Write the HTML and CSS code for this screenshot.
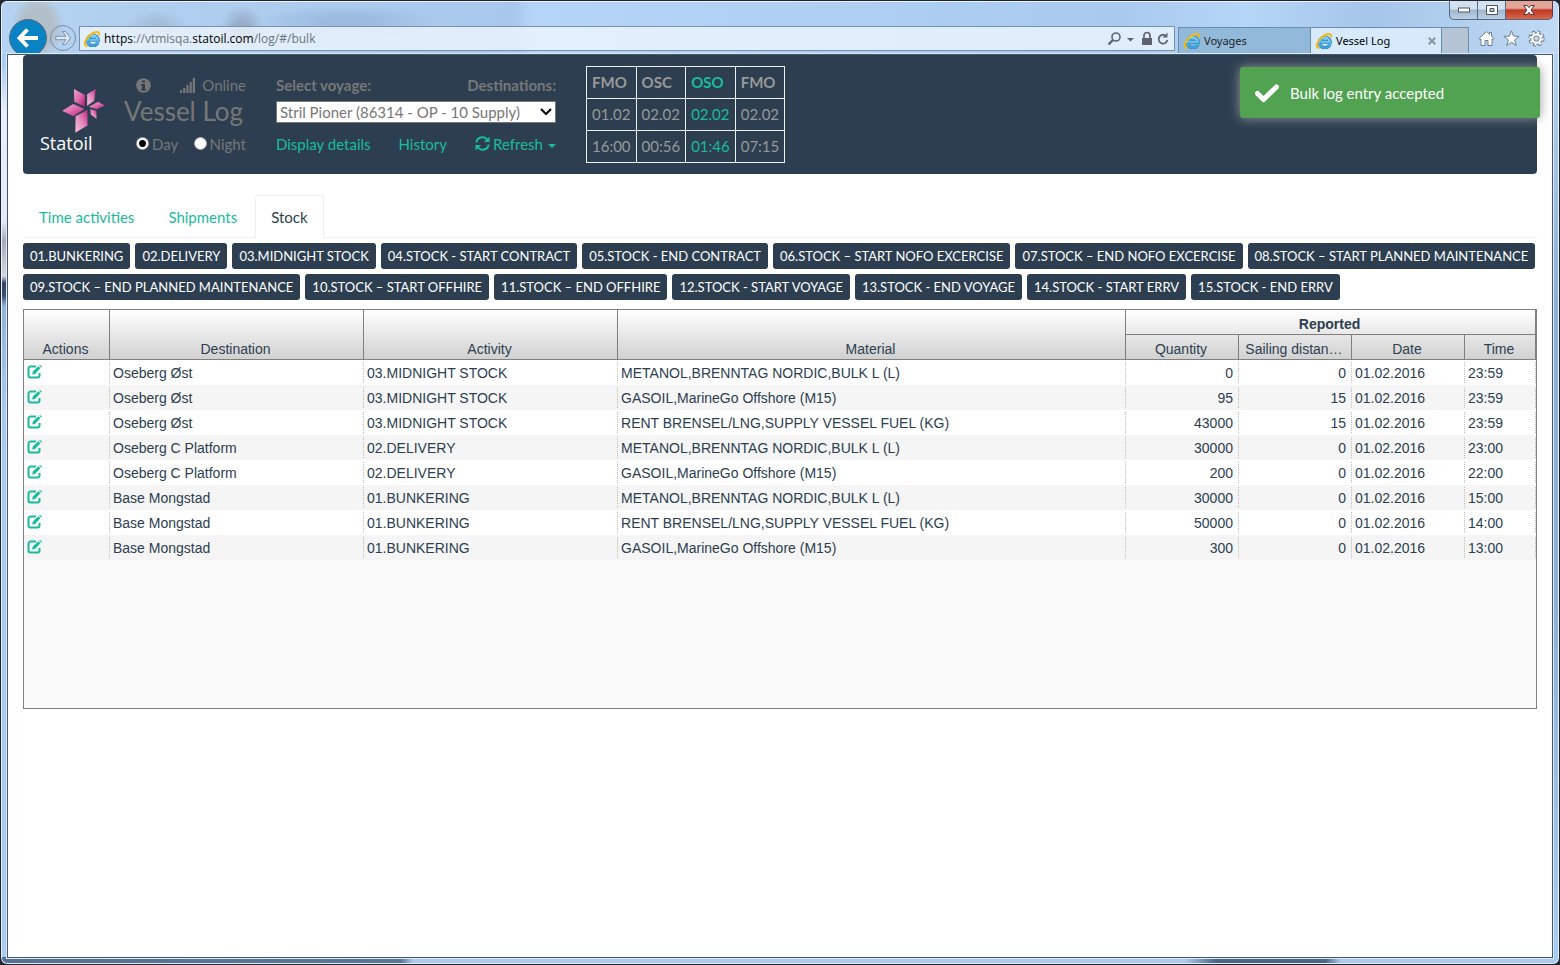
FILE: index.html
```html
<!DOCTYPE html>
<html lang="en">
<head>
<meta charset="utf-8">
<title>Vessel Log</title>
<link rel="stylesheet" href="styles.css">
</head>
<body>
<svg class="defs" aria-hidden="true">
  <defs>
    <linearGradient id="petal" x1="0" y1="0" x2="1" y2="1"><stop offset="0" stop-color="#f3a9cf"/><stop offset=".5" stop-color="#dd6aa9"/><stop offset="1" stop-color="#b8177a"/></linearGradient>
    <linearGradient id="petal-alt" x1="1" y1="0" x2="0" y2="1"><stop offset="0" stop-color="#c22784"/><stop offset=".5" stop-color="#e58bbc"/><stop offset="1" stop-color="#f6c3dd"/></linearGradient>
    <linearGradient id="ie-blue" x1="0" y1="0" x2="0" y2="1"><stop offset="0" stop-color="#8ad8f8"/><stop offset="1" stop-color="#3a9fdb"/></linearGradient>
    <symbol id="ie" viewBox="0 0 16 16">
      <path d="M13.800 11.200A5.200 5.200 0 1 1 14 8.900H5" fill="none" stroke="#2b86c2" stroke-width="3.600"/>
      <path d="M13.600 11.200A5.200 5.200 0 1 1 13.800 8.900H5" fill="none" stroke="url(#ie-blue)" stroke-width="2.200"/>
      <path d="M2.800 15C-.8 14 .8 8.500 5.500 4.500S15.500-.5 15.200 3.800" fill="none" stroke="#f5b80f" stroke-width="1.900" stroke-linecap="round"/>
    </symbol>
    <symbol id="edit" viewBox="0 0 16 14">
      <path d="M9 1.500H3.500A2 2 0 0 0 1.500 3.500v7A2 2 0 0 0 3.500 12.500h7a2 2 0 0 0 2-2V8" fill="none" stroke="currentColor" stroke-width="2"/>
      <path d="M5.200 9.500l.6-2.900L11.400 1.200l2 2L8 9zM12.200.6l.8-.6L15 1.800l-.7.900z" fill="currentColor"/>
    </symbol>
  </defs>
</svg>
<div class="window">
  <header class="chrome">
    <div class="titlebar">
      <button class="win-btn" aria-label="Minimize"><svg width="14" height="6" viewBox="0 0 14 6"><rect x="1.500" y="1" width="11" height="4" fill="#fff" stroke="#4b5565"/></svg></button>
      <button class="win-btn" aria-label="Maximize"><svg width="12" height="10" viewBox="0 0 12 10"><path d="M.5.500h11v9H.500zM4 3.500v3h4v-3z" fill="#fff" fill-rule="evenodd" stroke="#4b5565"/></svg></button>
      <button class="win-btn win-close" aria-label="Close"><svg width="12" height="10" viewBox="0 0 12 10"><path d="M.7.500h3.500L6 2.700 7.800.500h3.500L8 5l3.300 4.500H7.800L6 7.300 4.200 9.500H.7L4 5z" fill="#fff" stroke="#5b3440"/></svg></button>
    </div>
    <div class="navbar">
      <button class="back" aria-label="Back"><svg width="22" height="20" viewBox="0 0 22 20"><path d="M10.500 1.500L2.500 10l8 8.500M3 10h18" fill="none" stroke="#fff" stroke-width="4"/></svg></button>
      <button class="forward" aria-label="Forward"><svg width="16" height="16" viewBox="0 0 16 16"><path d="M7.500 1.500h3L15.500 8l-5 6.500h-3L11 9.700H.8V6.300H11z" fill="#dfeaf6" stroke="#7b8fa8"/></svg></button>
      <div class="address">
        <svg width="16" height="16"><use href="#ie"/></svg>
        <div class="url"><b>https</b>://vtmisqa.<b>statoil.com</b>/log/#/bulk</div>
        <svg class="address-icons" width="62" height="16" viewBox="0 0 62 16">
          <circle cx="9" cy="6" r="4" fill="none" stroke="#5d6470" stroke-width="1.600"/><path d="M6 9l-4.500 4.500" stroke="#5d6470" stroke-width="2.400"/>
          <path d="M20 7h7l-3.500 3.500z" fill="#5d6470"/>
          <path d="M35 7h10v7H35z" fill="#5d6470"/><path d="M37 7V4.500a3 3 0 0 1 6 0V7" fill="none" stroke="#5d6470" stroke-width="1.700"/>
          <path d="M58 4.200A4.400 4.400 0 1 0 60.400 9" fill="none" stroke="#5d6470" stroke-width="1.800"/><path d="M60.500 1.500v5H55.500z" fill="#5d6470"/>
        </svg>
      </div>
      <div class="tabs">
        <button class="tab"><svg width="16" height="16"><use href="#ie"/></svg>Voyages</button>
        <button class="tab tab-active"><svg width="16" height="16"><use href="#ie"/></svg>Vessel Log<svg class="tab-close" width="8" height="8" viewBox="0 0 8 8"><path d="M.7.700l6.600 6.600M7.300.700L.7 7.300" stroke="#8b95a1" stroke-width="2"/></svg></button>
        <button class="new-tab" aria-label="New tab"></button>
      </div>
      <div class="tools">
        <button class="tool" aria-label="Home"><svg width="17" height="17" viewBox="0 0 17 17"><path d="M8.500 1.500L1 8.500l1 1.200 1-.8V15.500h4v-5h3v5h4V8.900l1 .8 1-1.200-2.500-2.300V2.500h-2v1.800z" fill="#fff" stroke="#6c7d92"/></svg></button>
        <button class="tool" aria-label="Favorites"><svg width="17" height="17" viewBox="0 0 17 17"><path d="M8.500.800l2 5.300 5.700.300-4.500 3.500 1.600 5.600-4.800-3.200-4.800 3.200 1.600-5.600L.8 6.400l5.700-.3z" fill="#fff" stroke="#6c7d92"/></svg></button>
        <button class="tool" aria-label="Settings"><svg width="17" height="17" viewBox="0 0 17 17"><circle cx="8.500" cy="8.500" r="6.200" fill="none" stroke="#6c7d92" stroke-width="4" stroke-dasharray="2.800 2.070"/><circle cx="8.500" cy="8.500" r="4.300" fill="none" stroke="#6c7d92" stroke-width="4"/><circle cx="8.500" cy="8.500" r="6" fill="none" stroke="#fff" stroke-width="2.400" stroke-dasharray="1.900 2.810"/><circle cx="8.500" cy="8.500" r="4.200" fill="none" stroke="#fff" stroke-width="2.200"/></svg></button>
      </div>
    </div>
  </header>

  <main class="page">
    <section class="banner">
      <div class="logo">
        <svg class="star" width="43" height="44" viewBox="0 0 130 134">
          <path d="M36 0l33 18v36L37 39z" fill="url(#petal)"/>
          <path d="M102 0L76 16v35l22-15z" fill="url(#petal-alt)"/>
          <path d="M0 66l34-20 34 15-34 22z" fill="url(#petal)"/>
          <path d="M130 50l-21-11-28 15 24 8z" fill="url(#petal)"/>
          <path d="M86 62l18 4 1 25-18-13z" fill="url(#petal-alt)"/>
          <path d="M77 64v47l-37 22 1-50z" fill="url(#petal-alt)"/>
        </svg>
        <span class="logo-name">Statoil</span>
      </div>
      <div class="stack status">
        <div class="row status-row">
          <svg width="15" height="15" viewBox="0 0 15 15"><circle cx="7.500" cy="7.500" r="7.300" fill="#777"/><path d="M6 2.500h3v2H6zM5 6h4v5h1v1.500H5V11h1V7.500H5z" fill="#2c3e50"/></svg>
          <span class="online"><svg width="15" height="15" viewBox="0 0 15 15"><path d="M0 12h2.200v3H0zM3.200 10h2.200v5H3.200zM6.400 7h2.200v8H6.400zM9.600 4h2.200v11H9.600zM12.700 0H15v15h-2.300z" fill="#777"/></svg>Online</span>
        </div>
        <h1 class="app-title">Vessel Log</h1>
        <div class="row mode-row">
          <label class="mode"><input type="radio" name="mode" checked>Day</label>
          <label class="mode"><input type="radio" name="mode">Night</label>
        </div>
      </div>
      <div class="stack voyage">
        <div class="row"><label class="caption" for="voyage">Select voyage:</label><span class="caption">Destinations:</span></div>
        <div class="select-row">
          <select id="voyage"><option>Stril Pioner (86314 - OP - 10 Supply)</option></select>
          <svg class="chevron" width="12" height="8" viewBox="0 0 12 8"><path d="M1 1l5 5 5-5" fill="none" stroke="#000" stroke-width="2"/></svg>
        </div>
        <div class="row">
          <a href="#details">Display details</a>
          <a href="#history">History</a>
          <a class="refresh" href="#refresh"><svg width="15" height="15" viewBox="0 0 15 15"><path d="M1.300 6.500A6.200 6.200 0 0 1 12 3.300M13.700 8.500A6.200 6.200 0 0 1 3 11.700" fill="none" stroke="currentColor" stroke-width="2"/><path d="M14.500.500v5.500H9zM.5 14.500V9H6z" fill="currentColor"/></svg>Refresh<svg class="caret" width="8" height="4" viewBox="0 0 8 4"><path d="M0 0h8L4 4z" fill="currentColor"/></svg></a>
        </div>
      </div>
      <table class="stops">
        <tr><th>FMO</th><th>OSC</th><th class="current">OSO</th><th>FMO</th></tr>
        <tr><td>01.02</td><td>02.02</td><td class="current">02.02</td><td>02.02</td></tr>
        <tr><td>16:00</td><td>00:56</td><td class="current">01:46</td><td>07:15</td></tr>
      </table>
    </section>

    <div class="toast" role="status">
      <svg width="24" height="19" viewBox="0 0 24 19"><path d="M2.500 9.500l6 6L21.500 3" fill="none" stroke="#fff" stroke-width="5" stroke-linecap="round" stroke-linejoin="round"/></svg>
      Bulk log entry accepted
    </div>

    <nav class="views">
      <a class="view" href="#time">Time activities</a>
      <a class="view" href="#shipments">Shipments</a>
      <a class="view view-active" href="#bulk">Stock</a>
    </nav>

    <div class="activities">
      <button class="act">01.BUNKERING</button>
      <button class="act">02.DELIVERY</button>
      <button class="act">03.MIDNIGHT STOCK</button>
      <button class="act">04.STOCK - START CONTRACT</button>
      <button class="act">05.STOCK - END CONTRACT</button>
      <button class="act">06.STOCK – START NOFO EXCERCISE</button>
      <button class="act">07.STOCK – END NOFO EXCERCISE</button>
      <button class="act">08.STOCK – START PLANNED MAINTENANCE</button>
      <button class="act">09.STOCK – END PLANNED MAINTENANCE</button>
      <button class="act">10.STOCK – START OFFHIRE</button>
      <button class="act">11.STOCK – END OFFHIRE</button>
      <button class="act">12.STOCK - START VOYAGE</button>
      <button class="act">13.STOCK - END VOYAGE</button>
      <button class="act">14.STOCK - START ERRV</button>
      <button class="act">15.STOCK - END ERRV</button>
    </div>

    <div class="grid">
      <table class="log">
        <colgroup><col class="c-actions"><col class="c-place"><col class="c-place"><col><col class="c-num"><col class="c-num"><col class="c-num"><col class="c-time"></colgroup>
        <thead>
          <tr><th rowspan="2">Actions</th><th rowspan="2">Destination</th><th rowspan="2">Activity</th><th rowspan="2">Material</th><th class="group" colspan="4">Reported</th></tr>
          <tr><th>Quantity</th><th class="clip">Sailing distan…</th><th>Date</th><th>Time</th></tr>
        </thead>
        <tbody>
          <tr><td><div><button class="edit" aria-label="Edit"><svg width="16" height="14"><use href="#edit"/></svg></button></div></td><td><div>Oseberg Øst</div></td><td><div>03.MIDNIGHT STOCK</div></td><td><div>METANOL,BRENNTAG NORDIC,BULK L (L)</div></td><td class="num"><div>0</div></td><td class="num"><div>0</div></td><td><div>01.02.2016</div></td><td><div>23:59</div></td></tr>
          <tr><td><div><button class="edit" aria-label="Edit"><svg width="16" height="14"><use href="#edit"/></svg></button></div></td><td><div>Oseberg Øst</div></td><td><div>03.MIDNIGHT STOCK</div></td><td><div>GASOIL,MarineGo Offshore (M15)</div></td><td class="num"><div>95</div></td><td class="num"><div>15</div></td><td><div>01.02.2016</div></td><td><div>23:59</div></td></tr>
          <tr><td><div><button class="edit" aria-label="Edit"><svg width="16" height="14"><use href="#edit"/></svg></button></div></td><td><div>Oseberg Øst</div></td><td><div>03.MIDNIGHT STOCK</div></td><td><div>RENT BRENSEL/LNG,SUPPLY VESSEL FUEL (KG)</div></td><td class="num"><div>43000</div></td><td class="num"><div>15</div></td><td><div>01.02.2016</div></td><td><div>23:59</div></td></tr>
          <tr><td><div><button class="edit" aria-label="Edit"><svg width="16" height="14"><use href="#edit"/></svg></button></div></td><td><div>Oseberg C Platform</div></td><td><div>02.DELIVERY</div></td><td><div>METANOL,BRENNTAG NORDIC,BULK L (L)</div></td><td class="num"><div>30000</div></td><td class="num"><div>0</div></td><td><div>01.02.2016</div></td><td><div>23:00</div></td></tr>
          <tr><td><div><button class="edit" aria-label="Edit"><svg width="16" height="14"><use href="#edit"/></svg></button></div></td><td><div>Oseberg C Platform</div></td><td><div>02.DELIVERY</div></td><td><div>GASOIL,MarineGo Offshore (M15)</div></td><td class="num"><div>200</div></td><td class="num"><div>0</div></td><td><div>01.02.2016</div></td><td><div>22:00</div></td></tr>
          <tr><td><div><button class="edit" aria-label="Edit"><svg width="16" height="14"><use href="#edit"/></svg></button></div></td><td><div>Base Mongstad</div></td><td><div>01.BUNKERING</div></td><td><div>METANOL,BRENNTAG NORDIC,BULK L (L)</div></td><td class="num"><div>30000</div></td><td class="num"><div>0</div></td><td><div>01.02.2016</div></td><td><div>15:00</div></td></tr>
          <tr><td><div><button class="edit" aria-label="Edit"><svg width="16" height="14"><use href="#edit"/></svg></button></div></td><td><div>Base Mongstad</div></td><td><div>01.BUNKERING</div></td><td><div>RENT BRENSEL/LNG,SUPPLY VESSEL FUEL (KG)</div></td><td class="num"><div>50000</div></td><td class="num"><div>0</div></td><td><div>01.02.2016</div></td><td><div>14:00</div></td></tr>
          <tr><td><div><button class="edit" aria-label="Edit"><svg width="16" height="14"><use href="#edit"/></svg></button></div></td><td><div>Base Mongstad</div></td><td><div>01.BUNKERING</div></td><td><div>GASOIL,MarineGo Offshore (M15)</div></td><td class="num"><div>300</div></td><td class="num"><div>0</div></td><td><div>01.02.2016</div></td><td><div>13:00</div></td></tr>
        </tbody>
      </table>
    </div>
  </main>
</div>
</body>
</html>
```
FILE: styles.css
```css
* { box-sizing: border-box; }

body {
  margin: 0;
  background: #23262e;
  font-family: Lato, sans-serif;
  font-size: 15px;
  line-height: 20px;
  color: #2c3e50;
}

button {
  margin: 0;
  padding: 0;
  border: 0;
  background: none;
  font: inherit;
  color: inherit;
}

svg { flex: none; display: block; }
.defs { position: absolute; width: 0; height: 0; }
a { color: #18bc9c; text-decoration: none; }

/* Window frame */
.window {
  display: flex;
  flex-direction: column;
  min-height: 100vh;
  padding: 0 6px 6px;
  border: 1px solid #20242f;
  border-radius: 7px;
  box-shadow: inset 0 0 0 1px #e3f0fc;
  background:
    linear-gradient(90deg, #57708f 0, #5b7594 400px, transparent 412px) bottom / 100% 7px no-repeat,
    linear-gradient(90deg, transparent 76%, #4b6580 78%, #4b6580 85%, transparent 86%) bottom / 100% 7px no-repeat,
    linear-gradient(180deg, transparent 60px, #e9eef6 110px, #e6ebf3 220px, #aaa9b4 240px, #d8d8e0 275px, #34465e 282px, #3d5270 295px, #94b2d6 305px, #a9c7ea 400px, transparent 450px) left / 7px 100% no-repeat,
    linear-gradient(180deg, #c3d9f2, #8db0d6 300px, #8db0d6 600px, #a9cdf2) right / 7px 100% no-repeat,
    #a9cbef;
}

.chrome {
  margin: 0 -5px;
  padding: 0 5px;
  border-radius: 6px 6px 0 0;
  background:
    linear-gradient(180deg, #e6f2fd 1px, transparent 1px),
    radial-gradient(ellipse 26px 34px at 36px 26px, #b3bfc8 60%, transparent),
    radial-gradient(ellipse 22px 24px at 240px 28px, #98adca 30%, transparent),
    radial-gradient(ellipse 30px 16px at 155px 24px, #a3bddb 20%, transparent),
    radial-gradient(ellipse 90px 16px at 345px 20px, #9bbbe0 30%, transparent),
    linear-gradient(90deg, #b4d2f1, #a7c8ec 33%, #b4d5f8 34%, #a8caee 72%, #b6d6f8 80%, #a5c5e9 88%, #c0daf5);
}

.titlebar { display: flex; justify-content: flex-end; height: 18px; }

.win-btn {
  display: flex;
  align-items: center;
  justify-content: center;
  width: 28px;
  height: 19px;
  border: 1px solid #56697f;
  border-top: 0;
  border-right: 0;
  background: linear-gradient(#d3e1f0 45%, #a0b7cf 50%, #bad0e6);
}
.win-btn:first-child { border-radius: 0 0 0 5px; }
.win-close {
  width: 48px;
  border-right: 1px solid #6b3038;
  border-radius: 0 0 5px 0;
  background: linear-gradient(#e3a598 40%, #bf3a25 50%, #d7664a);
}

.navbar { display: flex; align-items: flex-end; height: 35px; overflow: hidden; padding-left: 2px; }

.back, .forward { display: flex; align-items: center; justify-content: center; border-radius: 50%; }
.back {
  align-self: flex-start;
  width: 38px;
  height: 38px;
  border: 1px solid #5a6b7c;
  background: #0a83c4;
}
.forward {
  width: 26px;
  height: 26px;
  margin: 0 3px 3px;
  border: 1px solid #7b8fa8;
}

.address {
  flex: 1;
  display: flex;
  align-items: center;
  height: 25px;
  margin: 0 3px 3px 0;
  padding: 0 5px 0 4px;
  border: 1px solid #7790ad;
  background: rgba(238, 245, 253, .8);
  font: 12px/16px "Open Sans", sans-serif;
  color: #6d737b;
}
.url { flex: 1; margin-left: 4px; }
.url b { font-weight: 400; color: #000; }

.tabs { display: flex; height: 27px; }
.tab, .new-tab { border: 1px solid #6d8cad; border-bottom: 0; }
.tab {
  display: flex;
  align-items: center;
  gap: 4px;
  width: 133px;
  padding: 0 5px;
  background: #92b9da;
  font: 11px/16px "Noto Sans", sans-serif;
  text-align: left;
  color: #222;
}
.tab-active { width: 131px; border-left: 0; background: #d7eafb; color: #000; }
.tab-close { margin-left: auto; }
.new-tab { width: 27px; border-left: 0; background: #b5c4d4; }
.tools { display: flex; gap: 8px; margin: 0 8px 7px 9px; }

/* Page */
.page {
  position: relative;
  flex: 1;
  padding: 0 15px 20px;
  border: 1px solid #45566b;
  box-shadow: 0 0 0 1px #dcebfa;
  background: #fff;
}

.banner {
  display: flex;
  align-items: center;
  gap: 30px;
  padding: 0 17px;
  border-radius: 4px;
  background: #2c3e50;
  color: #777;
}

.logo { display: flex; flex-direction: column; width: 65px; margin-right: -11px; padding-top: 12px; }
.star { margin-left: 22px; }
.logo-name { font: 18px/20px "Open Sans", sans-serif; color: #fff; }

.stack { display: grid; grid-template-rows: 20px 33px 31px; align-items: center; padding: 20px 0 15px; }
.row { display: flex; align-items: center; justify-content: space-between; }
.status { width: 122px; }
.status-row { padding-left: 12px; }
.online { display: flex; align-items: center; gap: 7px; }
.app-title { margin: 0; padding-bottom: 2px; font-size: 26px; line-height: 28px; font-weight: 400; }
.mode-row { padding-left: 12px; }
.mode { display: flex; align-items: center; gap: 3px; }
.mode input {
  appearance: none;
  width: 13px;
  height: 13px;
  margin: 0;
  border: 1px solid #aaa;
  border-radius: 50%;
  background: #fff;
}
.mode input:checked { background: radial-gradient(#000 3px, #fff 4px); }

.voyage { width: 280px; }
.caption { font-weight: 700; }
.select-row { position: relative; display: flex; }
.select-row select {
  appearance: none;
  width: 100%;
  height: 22px;
  padding: 0 3px;
  border: 1px solid #777;
  border-radius: 0;
  background: #fff;
  font: 15px/20px Lato, sans-serif;
  color: #777;
}
.chevron { position: absolute; right: 4px; top: 7px; pointer-events: none; }
.refresh { display: flex; align-items: center; gap: 3px; }
.caret { margin: 4px 0 0 2px; }

.stops { border-collapse: collapse; color: #999; }
.stops th, .stops td { height: 32px; padding: 0 5px 2px; border: 1px solid #ecf0f1; text-align: left; }
.stops .current { color: #18bc9c; }

.toast {
  position: absolute;
  top: 12px;
  right: 12px;
  display: flex;
  align-items: center;
  gap: 11px;
  width: 300px;
  padding: 16px 15px 14px;
  border-radius: 3px;
  box-shadow: 0 0 12px #999;
  background: #51a351;
  line-height: 21px;
  color: #fff;
}

.views { display: flex; gap: 2px; margin-top: 21px; border-bottom: 1px solid #ecf0f1; }
.view { padding: 11px 15px; border: 1px solid transparent; border-bottom: 0; margin-bottom: -1px; }
.view-active { border-color: #ecf0f1; border-radius: 4px 4px 0 0; background: #fff; color: #2c3e50; }

.activities { display: flex; flex-wrap: wrap; gap: 5px; margin-top: 5px; }
.act {
  height: 26px;
  padding: 0 7px;
  border-radius: 3px;
  background: #2c3e50;
  font-size: 13px;
  color: #fff;
}

/* Log grid */
.grid {
  min-height: 400px;
  margin-top: 9px;
  border: 1px solid #7f7f7f;
  background: #fafafa;
  font: 14px/23px "Liberation Sans", Arial, sans-serif;
}
.log { width: 100%; table-layout: fixed; border-collapse: separate; border-spacing: 0; }
.c-actions { width: 86px; }
.c-place { width: 16.8%; }
.c-num { width: 113px; }
.c-time { width: 71px; }
.log thead { background: linear-gradient(#fff, #d0d0d0); }
.log th {
  height: 25px;
  padding: 0 5px 0 3px;
  border-right: 1px solid #7f7f7f;
  border-bottom: 1px solid #7f7f7f;
  vertical-align: bottom;
  line-height: 19px;
  font-weight: 400;
}
.log .group { font-weight: 700; }
.log .clip { white-space: nowrap; }
.log td { padding: 2px 0; background: #fff; }
.log tbody tr:nth-child(even) td { background: #f5f5f5; }
.log td div { height: 21px; padding: 0 5px 0 3px; border-right: 1px dotted #bbb; white-space: nowrap; overflow: hidden; }
.log .num { text-align: right; }
.edit { display: block; padding-top: 3px; color: #18bc9c; }
```
